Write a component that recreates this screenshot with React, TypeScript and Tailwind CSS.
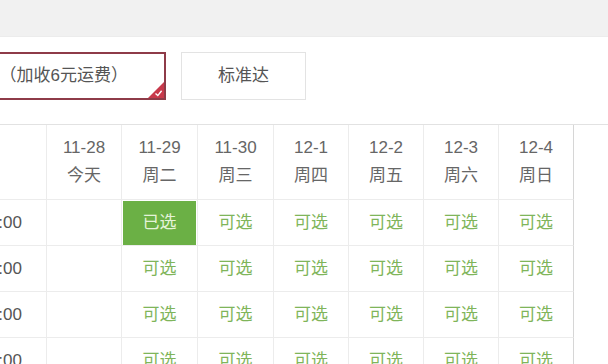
import React from "react";

const dates = [
  ["11-28", "今天"],
  ["11-29", "周二"],
  ["11-30", "周三"],
  ["12-1", "周四"],
  ["12-2", "周五"],
  ["12-3", "周六"],
  ["12-4", "周日"],
];

const times = ["09:00-12:00", "12:00-15:00", "15:00-18:00", "18:00-21:00"];

const font = { fontFamily: '"Liberation Sans", "Noto Sans CJK SC", sans-serif' };

export default function App() {
  return (
    <div className="w-[608px] h-[364px] overflow-hidden bg-white" style={font}>
      <div className="h-[37px] bg-[#f1f1f1] border-b border-[#ececec]" />
      <div className="flex mt-[15px]">
        <div className="relative -ml-[40px] w-[206px] h-[48px] border-2 border-[#8e3b48] flex items-center justify-end pr-[36px] text-[17px] text-[#555]">
          <span className="whitespace-nowrap">（加收6元运费）</span>
          <div className="absolute right-0 bottom-0 w-[16px] h-[16px]">
            <svg width="16" height="16" viewBox="0 0 16 16">
              <polygon points="16,0 16,16 0,16" fill="#c8394b" />
              <path d="M7.5 11.5 L9.8 13.6 L13.6 8.8" stroke="#fff" strokeWidth="1.4" fill="none" />
            </svg>
          </div>
        </div>
        <div className="ml-[15px] w-[125px] h-[48px] border border-[#e3e3e3] flex items-center justify-center text-[17px] text-[#555]">
          标准达
        </div>
      </div>
      <div className="mt-[24px] -ml-[113px] grid grid-cols-[160px_75px_76px_76px_75px_75px_75px_75px] border-t border-[#e2e2e2]">
        <div className="h-[75px] border-r border-b border-[#ececec]" />
        {dates.map(([d, w], i) => (
          <div
            key={d}
            className={`h-[75px] border-b border-[#ececec] flex flex-col items-center justify-center text-[17px] leading-[28px] text-[#666] ${
              i === 6 ? "border-r border-r-[#d6d6d6]" : "border-r"
            }`}
          >
            <span>{d}</span>
            <span>{w}</span>
          </div>
        ))}
        {times.map((t, r) => (
          <React.Fragment key={t}>
            <div className="h-[46px] border-r border-b border-[#ececec] flex items-center justify-end pr-[24px] text-[17px] text-[#555] whitespace-nowrap">
              {t}
            </div>
            {dates.map(([d], i) => {
              const last = i === 6 ? "border-r border-r-[#d6d6d6]" : "border-r";
              if (i === 0)
                return <div key={d} className={`h-[46px] border-b border-[#ececec] ${last}`} />;
              if (r === 0 && i === 1)
                return (
                  <div key={d} className={`h-[46px] border-b border-[#ececec] ${last} bg-white`}>
                    <div className="h-[44px] mx-[1px] mt-[1px] bg-[#6bb045] flex items-center justify-center text-[17px] text-[#e4f3d8]">
                      已选
                    </div>
                  </div>
                );
              return (
                <div
                  key={d}
                  className={`h-[46px] border-b border-[#ececec] ${last} flex items-center justify-center text-[17px] text-[#7fb55a]`}
                >
                  可选
                </div>
              );
            })}
          </React.Fragment>
        ))}
      </div>
    </div>
  );
}
